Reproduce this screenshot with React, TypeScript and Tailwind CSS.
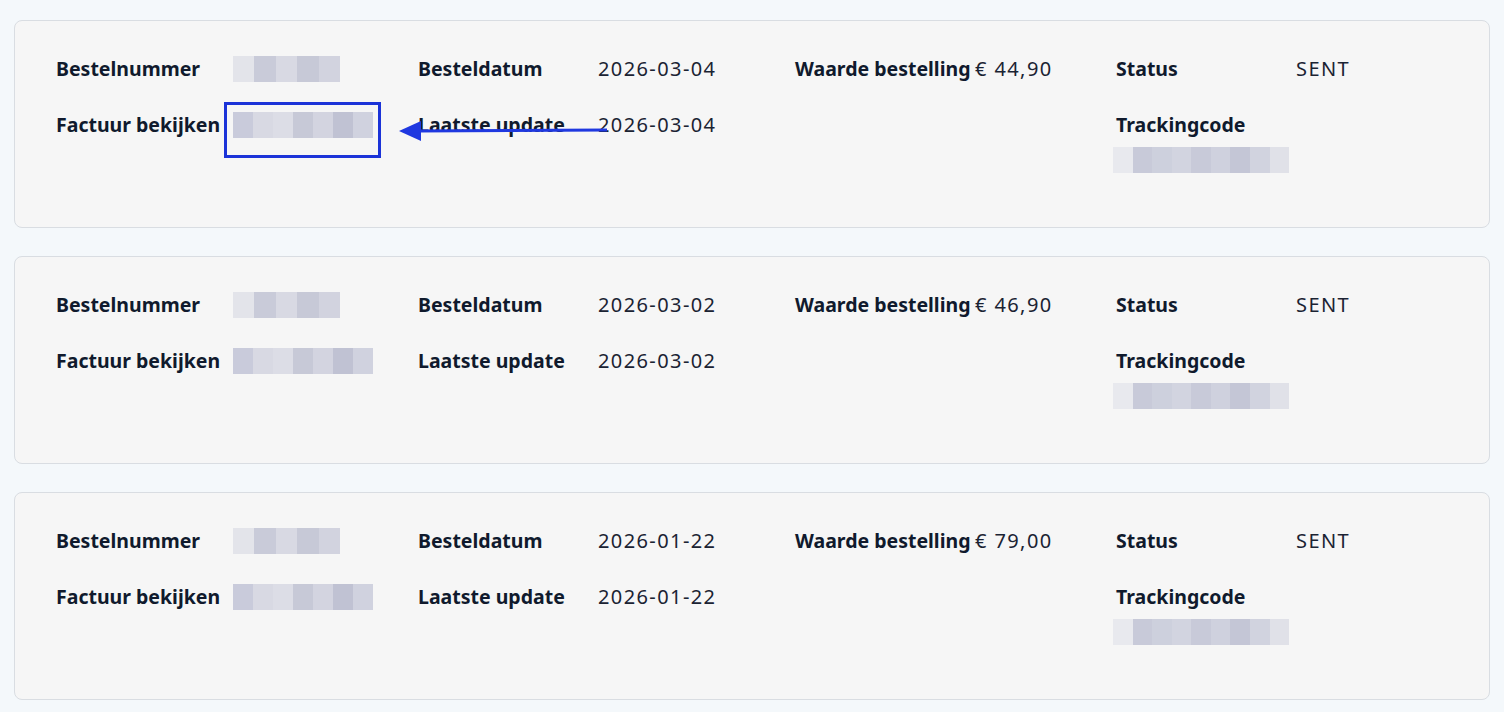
const orders = [
  { date: '2026-03-04', updated: '2026-03-04', value: '€ 44,90', status: 'SENT', marked: true },
  { date: '2026-03-02', updated: '2026-03-02', value: '€ 46,90', status: 'SENT', marked: false },
  { date: '2026-01-22', updated: '2026-01-22', value: '€ 79,00', status: 'SENT', marked: false },
];

// pixelated placeholder for the redacted values
function Redacted({ w, shades }: { w: string; shades: string[] }) {
  return (
    <div className={`flex h-[26px] ${w}`}>
      {shades.map((s, i) => (
        <div key={i} className="h-full flex-1" style={{ backgroundColor: s }} />
      ))}
    </div>
  );
}

function Field({ label, children }: { label: string; children: React.ReactNode }) {
  return (
    <div className="flex items-center h-7">
      <div className="min-w-[180px] font-bold text-[19.5px] text-[#101a2d]">{label}</div>
      <div className="text-[20px] tracking-[0.07em] text-[#1b2333]">{children}</div>
    </div>
  );
}

function OrderCard({ o }: { o: (typeof orders)[number] }) {
  return (
    <div className="relative rounded-lg border border-[#d9dde2] bg-[#f6f6f6] pl-[41px] pt-[34px] h-[208px]">
      <div className="grid grid-cols-[362px_377px_321px_1fr] gap-y-7">
        <Field label="Bestelnummer">
          <Redacted w="w-[107px] -ml-[3px]" shades={['#e3e4ea', '#c9cbd9', '#d8d9e3', '#c7c9d7', '#d2d3df']} />
        </Field>
        <Field label="Besteldatum">{o.date}</Field>
        <Field label="Waarde bestelling">{o.value}</Field>
        <Field label="Status">{o.status}</Field>

        <Field label="Factuur bekijken">
          <Redacted w="w-[140px] -ml-[3px]" shades={['#c9cbdb', '#d8d9e3', '#dcdde6', '#c7c9d7', '#d3d4e0', '#c0c2d3', '#d0d2df']} />
        </Field>
        <Field label="Laatste update">{o.updated}</Field>
        <div />
        <div className="flex flex-col">
          <div className="font-bold text-[19.5px] text-[#101a2d] h-7 flex items-center">Trackingcode</div>
          <div className="mt-[8px]">
            <Redacted w="w-[176px] -ml-[3px]" shades={['#e8e9ee', '#c8cad9', '#cdd0dd', '#d2d4e0', '#c8cad9', '#cfd1de', '#c4c6d6', '#d1d3df', '#e0e1e8']} />
          </div>
        </div>
      </div>

      {o.marked && (
        <>
          <div className="absolute left-[209px] top-[81px] w-[157px] h-[56px] border-[3px] border-[#1b33d8]" />
          <svg className="absolute left-[384px] top-[98px]" width="210" height="24" viewBox="0 0 210 24">
            <line x1="18" y1="12" x2="208" y2="11" stroke="#1f38e0" strokeWidth="3" />
            <polygon points="0,12 22,2 22,22" fill="#1f38e0" />
          </svg>
        </>
      )}
    </div>
  );
}

export default function App() {
  return (
    <div
      className="min-h-[712px] bg-[#f4f8fb] px-[14px] pt-5"
      style={{ fontFamily: '"Noto Sans", Lato, sans-serif' }}
    >
      <div className="flex flex-col gap-7">
        {orders.map((o, i) => (
          <OrderCard key={i} o={o} />
        ))}
      </div>
    </div>
  );
}
